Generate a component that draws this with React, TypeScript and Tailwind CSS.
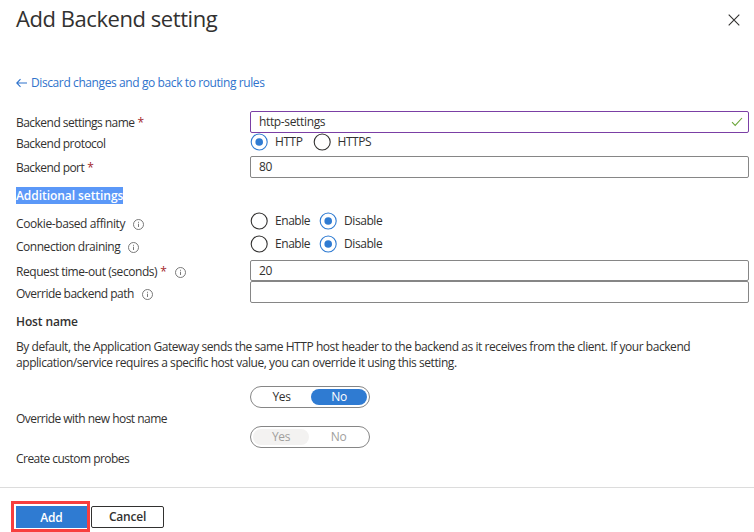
import type { ReactNode } from "react";

function Info() {
  return (
    <svg className="size-[11px] shrink-0" viewBox="0 0 11 11" fill="none" stroke="#6b6b6b" strokeWidth="0.9">
      <circle cx="5.5" cy="5.5" r="5" />
      <path d="M5.5 4.7V8M5.5 2.8V3.8" />
    </svg>
  );
}

function Row({ label, className, labelClass, children }: { label: ReactNode; className: string; labelClass: string; children?: ReactNode }) {
  return (
    <div className={`flex items-start ${className}`}>
      <div className={`flex w-[234px] shrink-0 items-center whitespace-nowrap leading-[18px] ${labelClass}`}>{label}</div>
      {children}
    </div>
  );
}

function Star() {
  return <span className="ml-[3px] text-[#a4262c]">*</span>;
}

function Radio({ on, text, className = "" }: { on?: boolean; text: string; className?: string }) {
  return (
    <span className={`flex items-center ${className}`}>
      <svg className="size-[18px] shrink-0" viewBox="0 0 18 18" fill="none">
        <circle cx="9.2" cy="9" r="8" stroke={on ? "#2f7bd2" : "#323130"} strokeWidth="1.1" />
        {on && <circle cx="9.2" cy="9" r="3.8" fill="#2f7bd2" />}
      </svg>
      <span className="ml-[7px] leading-[18px] tracking-[-0.45px]">{text}</span>
    </span>
  );
}

function Field({ value, className, children }: { value?: string; className: string; children?: ReactNode }) {
  return (
    <div className={`flex w-[499px] items-center justify-between rounded-[2px] border pl-2 pr-[5px] ${className}`}>
      <span>{value}</span>
      {children}
    </div>
  );
}

export default function App() {
  return (
    <main className="flex h-[532px] w-[754px] flex-col overflow-hidden bg-white font-['Open_Sans',sans-serif] text-[12px] tracking-[-0.35px] text-[#323130]">
      <header className="flex h-[74px] items-start justify-between pl-4 pr-[14px]">
        <h1 className="pt-[3px] text-[22px] font-medium leading-[30px] tracking-[-0.44px]">Add Backend setting</h1>
        <svg className="mt-[14px] size-[12px]" viewBox="0 0 12 12" stroke="#323130" strokeWidth="1.1">
          <path d="M.7.7l10.6 10.6M11.3.7L.7 11.3" />
        </svg>
      </header>
      <a className="ml-4 flex h-[37px] items-start leading-[18px] text-[#2f73cc]">
        <svg className="mr-1 mt-[4px] h-[10px] w-[11px]" viewBox="0 0 11 10" fill="none" stroke="currentColor" strokeWidth="1.1">
          <path d="M11 5H1M4.5 1.2L.8 5l3.7 3.8" />
        </svg>
        <span className="tracking-[-0.4px]">Discard changes and go back to routing rules</span>
      </a>
      <section className="flex flex-col pl-4">
        <Row className="h-[22px]" labelClass="pt-[3px] tracking-[-0.53px]" label={<>Backend settings name<Star /></>}>
          <Field value="http-settings" className="h-[22px] border-[#7b3fa5]">
            <svg className="size-[12px]" viewBox="0 0 12 12" fill="none" stroke="#6ba539" strokeWidth="1.1"><path d="M1 6.2l3.2 3.2L11 2" /></svg>
          </Field>
        </Row>
        <Row className="h-[23px]" labelClass="pt-[2px] tracking-[-0.53px]" label="Backend protocol">
          <div className="flex"><Radio on text="HTTP" /><Radio text="HTTPS" className="ml-[10px]" /></div>
        </Row>
        <Row className="h-[31px]" labelClass="pt-[3px] tracking-[-0.55px]" label={<>Backend port<Star /></>}>
          <Field value="80" className="h-[22px] border-[#868686]" />
        </Row>
        <h2 className="mb-[8px] h-[17px] self-start bg-[#5b98f8] font-semibold leading-[18px] tracking-[-0.06px] text-white">Additional settings</h2>
        <Row className="h-[23px]" labelClass="pt-[3px] gap-2 tracking-[-0.39px]" label={<>Cookie-based affinity<Info /></>}>
          <div className="flex"><Radio text="Enable" /><Radio on text="Disable" className="ml-[9px]" /></div>
        </Row>
        <Row className="h-[25px]" labelClass="pt-[3px] gap-2 tracking-[-0.47px]" label={<>Connection draining<Info /></>}>
          <div className="flex"><Radio text="Enable" /><Radio on text="Disable" className="ml-[9px]" /></div>
        </Row>
        <Row className="h-[21px]" labelClass="pt-[3px] gap-[9px] tracking-[-0.44px]" label={<><span>Request time-out (seconds)<Star /></span><Info /></>}>
          <Field value="20" className="h-[21px] border-[#868686]" />
        </Row>
        <Row className="h-[31px]" labelClass="pt-[4px] gap-2 tracking-[-0.5px]" label={<>Override backend path<Info /></>}>
          <Field className="h-[22px] border-[#868686]" />
        </Row>
        <h2 className="h-[26px] pt-px font-semibold leading-[18px] tracking-[-0.12px]">Host name</h2>
        <p className="h-[48px] whitespace-nowrap pt-px leading-4 tracking-[-0.44px]">
          By default, the Application Gateway sends the same HTTP host header to the backend as it receives from the client. If your backend<br />
          application/service requires a specific host value, you can override it using this setting.
        </p>
        <Row className="h-[40px]" labelClass="pt-[24px] tracking-[-0.53px]" label="Override with new host name">
          <div className="flex h-[22px] w-[120px] items-center rounded-full border border-[#868686] px-[2px] text-center leading-[15px]">
            <span className="h-4 w-[58px] pr-px">Yes</span>
            <span className="h-4 w-[56px] rounded-full bg-[#2f7bd2] text-white">No</span>
          </div>
        </Row>
        <Row className="h-[61px]" labelClass="pt-[24px] tracking-[-0.53px]" label="Create custom probes">
          <div className="flex h-[22px] w-[120px] items-center rounded-full border border-[#868686] px-[2px] text-center leading-[15px] text-[#a19f9d]">
            <span className="h-4 w-[56px] rounded-full bg-[#f3f2f1]">Yes</span>
            <span className="h-4 w-[58px] pl-px">No</span>
          </div>
        </Row>
      </section>
      <footer className="flex h-[45px] items-start gap-px border-t border-[#dcdcdc] pl-[11px] pt-[13px] font-semibold tracking-[-0.2px]">
        <div className="h-[31px] w-[79px] border-[3px] border-[#f83e3e] pl-[2px] pt-[2px]">
          <button className="block h-[22px] w-[71px] bg-[#2f7bd2] leading-[21px] text-white">Add</button>
        </div>
        <button className="mt-[5px] h-[22px] w-[73px] rounded-[2px] border border-[#323130] leading-5">Cancel</button>
      </footer>
    </main>
  );
}
